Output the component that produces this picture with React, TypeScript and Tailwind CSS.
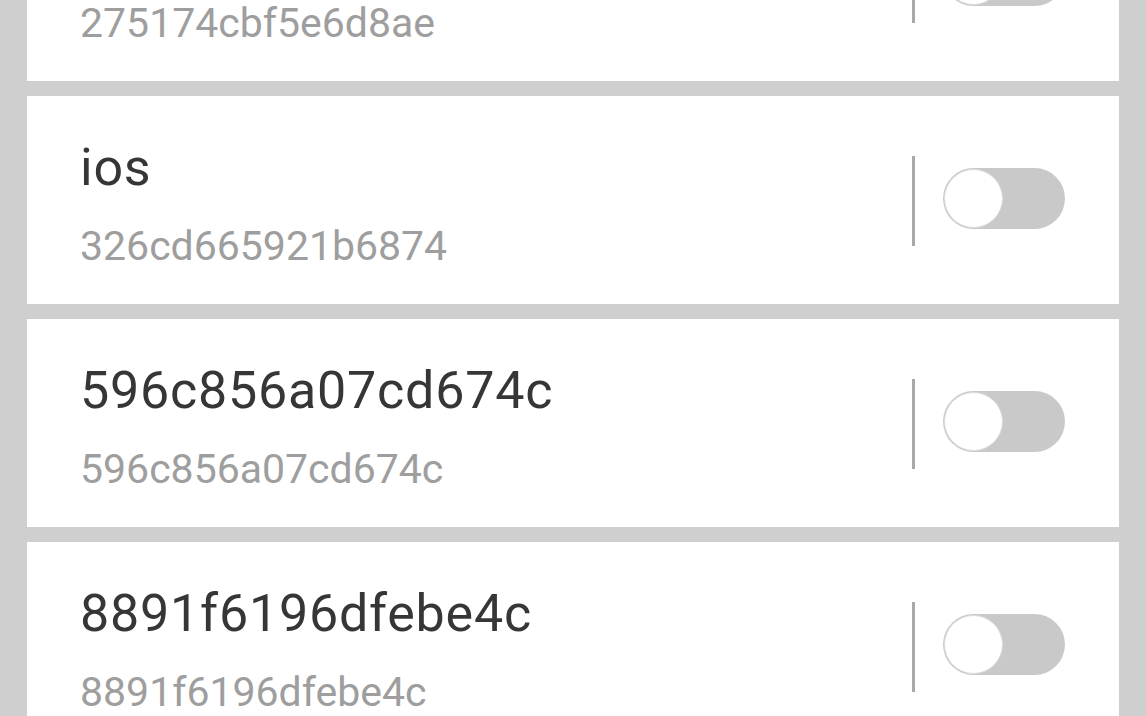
import React, { useState } from "react";

type Device = { name: string; id: string };

const devices: Device[] = [
  { name: "275174cbf5e6d8ae", id: "275174cbf5e6d8ae" },
  { name: "ios", id: "326cd665921b6874" },
  { name: "596c856a07cd674c", id: "596c856a07cd674c" },
  { name: "8891f6196dfebe4c", id: "8891f6196dfebe4c" },
];

const Toggle = ({ on, onChange }: { on: boolean; onChange: () => void }) => (
  <button
    type="button"
    onClick={onChange}
    className={`relative h-[61px] w-[122px] rounded-full ${on ? "bg-[#7cc576]" : "bg-[#c9c9c9]"}`}
  >
    <span
      className={`absolute top-[1px] h-[59px] w-[59px] rounded-full bg-white border border-[#dcdcdc] ${on ? "right-[1px]" : "left-[1px]"}`}
    />
  </button>
);

const DeviceCard = ({ device }: { device: Device }) => {
  const [on, setOn] = useState(false);
  return (
    <div className="flex h-[208px] items-center bg-white pl-[53px] pr-[54px]">
      <div className="flex-1 self-start pt-[46px]">
        <div className="text-[52px] leading-none tracking-[0.015em] text-[#363636]">{device.name}</div>
        <div className="mt-[32px] text-[41px] leading-none text-[#9e9e9e]">{device.id}</div>
      </div>
      <div className="mt-[2px] h-[90px] w-[3px] bg-[#a9a9a9]" />
      <div className="ml-[28px] mt-[4px]">
        <Toggle on={on} onChange={() => setOn(!on)} />
      </div>
    </div>
  );
};

export default function App() {
  return (
    <div
      className="min-h-screen overflow-hidden bg-[#cfcfcf] px-[27px]"
      style={{ fontFamily: "Roboto, 'Noto Sans', sans-serif" }}
    >
      {/* list is scrolled: first card starts above the viewport */}
      <div className="-mt-[127px] flex flex-col gap-[15px] pb-[40px]">
        {devices.map((d) => (
          <DeviceCard key={d.id + d.name} device={d} />
        ))}
      </div>
    </div>
  );
}
